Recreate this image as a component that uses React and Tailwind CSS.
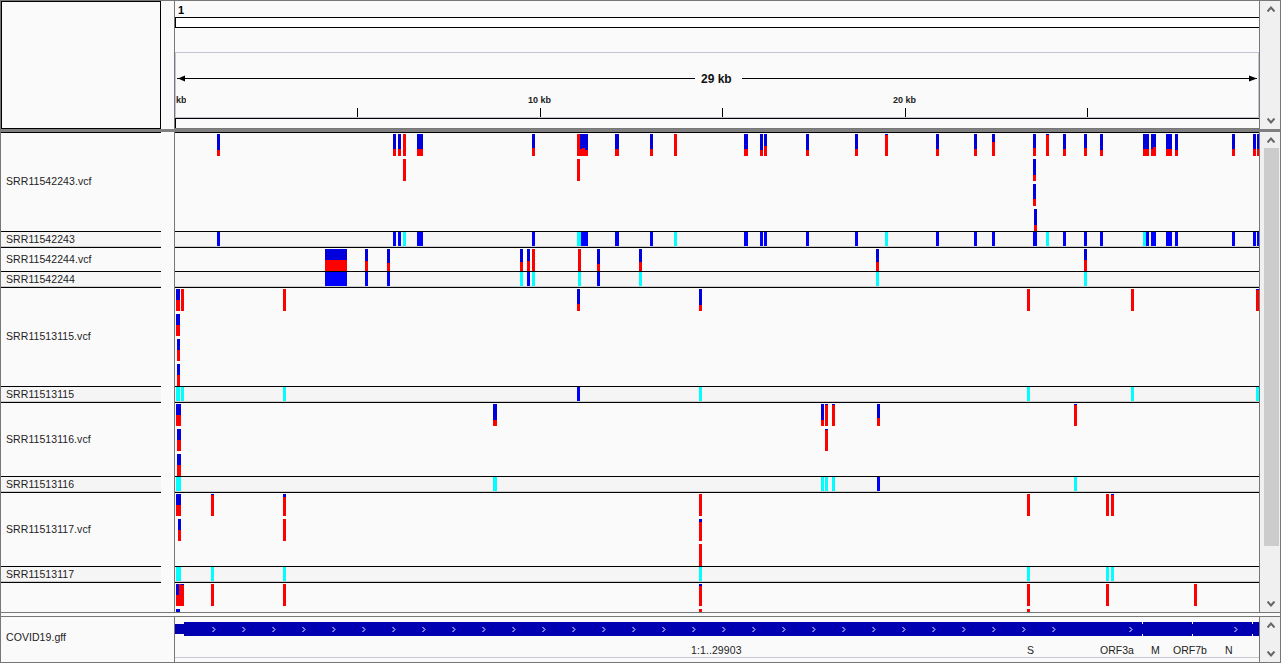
import React from 'react'

const BORDER = 'border-[#777777]'

// vcf marks: [x, width, blue px of 22, stacked row]
const TRACKS = [
  {
    name: 'SRR11542243',
    top: 132,
    height: 99,
    vcf: [
      [217, 3, 16], [393, 3, 15], [398, 3, 15], [403, 3, 0], [417, 6, 15], [532, 3, 14], [577, 3, 0], [580, 2, 15],
      [582, 3, 14], [585, 3, 16], [615, 4, 15], [650, 3, 15], [674, 3, 0], [744, 4, 15], [760, 3, 16], [764, 3, 12],
      [806, 3, 16], [855, 3, 15], [885, 3, 1], [936, 3, 15], [974, 3, 15], [992, 3, 8], [1033, 3, 14], [1046, 3, 1],
      [1063, 3, 15], [1084, 3, 14], [1100, 3, 16], [1143, 6, 15], [1151, 2, 15], [1153, 3, 13], [1166, 6, 15],
      [1175, 3, 16], [1232, 3, 15], [1253, 3, 15], [1257, 2, 15],
      [403, 3, 0, 1], [577, 3, 0, 1], [1033, 3, 16, 1], [1033, 3, 15, 2], [1034, 3, 16, 3],
    ],
    cov: [
      [217, 3], [393, 3], [398, 3], [403, 3, 1], [417, 6], [532, 3], [577, 4, 1], [581, 7], [615, 4], [650, 3],
      [674, 3, 1], [744, 4], [760, 3], [764, 3], [806, 3], [855, 3], [885, 3, 1], [936, 3], [974, 3], [992, 3],
      [1033, 4], [1046, 3, 1], [1063, 3], [1084, 3], [1100, 3], [1143, 3, 1], [1146, 3], [1151, 5], [1166, 6],
      [1175, 3], [1232, 3], [1253, 3], [1257, 2],
    ],
  },
  {
    name: 'SRR11542244',
    top: 247,
    height: 24,
    vcf: [
      [325, 22, 11], [365, 3, 12], [387, 3, 14], [520, 3, 13], [527, 3, 12], [532, 3, 0], [578, 3, 0], [597, 3, 15],
      [639, 3, 13], [876, 3, 13], [1084, 3, 11],
    ],
    cov: [
      [325, 22], [365, 3], [387, 3], [520, 3, 1], [527, 3], [532, 3, 1], [578, 3, 1], [597, 3], [639, 3, 1],
      [876, 3, 1], [1084, 3, 1],
    ],
  },
  {
    name: 'SRR11513115',
    top: 287,
    height: 99,
    vcf: [
      [176, 4, 11], [181, 3, 0], [283, 3, 0], [577, 3, 15], [699, 3, 16], [1027, 3, 0], [1131, 3, 0], [1256, 3, 1],
      [176, 4, 11, 1], [177, 3, 11, 2], [177, 3, 11, 3],
    ],
    cov: [
      [176, 4, 1], [181, 3, 1], [283, 3, 1], [577, 3], [699, 3, 1], [1027, 3, 1], [1131, 3, 1], [1256, 3, 1],
    ],
  },
  {
    name: 'SRR11513116',
    top: 402,
    height: 74,
    vcf: [
      [176, 5, 11], [493, 4, 16], [821, 3, 16], [825, 3, 1], [832, 3, 1], [877, 3, 14], [1074, 3, 1],
      [177, 4, 11, 1], [825, 3, 1, 1], [177, 4, 11, 2],
    ],
    cov: [[176, 5, 1], [493, 4, 1], [821, 3, 1], [825, 3, 1], [832, 3, 1], [877, 3], [1074, 3, 1]],
  },
  {
    name: 'SRR11513117',
    top: 492,
    height: 74,
    vcf: [
      [176, 5, 11], [211, 3, 1], [283, 3, 3], [699, 3, 0], [1027, 3, 0], [1106, 3, 0], [1111, 3, 1],
      [178, 3, 11, 1], [283, 3, 0, 1], [699, 3, 3, 1], [699, 3, 0, 2],
    ],
    cov: [[176, 5, 1], [211, 3, 1], [283, 3, 1], [699, 3, 1], [1027, 3, 1], [1106, 3, 1], [1111, 3, 1]],
  },
]

const LAST_VCF = [
  [176, 3, 11], [179, 2, 0], [181, 3, 1], [211, 3, 0], [283, 3, 0], [699, 3, 2], [1027, 3, 0], [1106, 3, 0],
  [1194, 3, 0], [176, 4, 22, 1], [699, 3, 0, 1], [1027, 3, 0, 1],
]

const TICKS = [357, 540, 722, 905, 1087]

const CHEVRONS = [...Array.from({ length: 29 }, (_, i) => 213 + i * 30), 1130, 1235]

const GENES = [
  { label: 'S', left: 852 },
  { label: 'ORF3a', left: 925 },
  { label: 'M', left: 976 },
  { label: 'ORF7b', left: 998 },
  { label: 'N', left: 1050 },
]

function ScrollArrow({ up }) {
  return (
    <svg width="8" height="6" viewBox="0 0 8 6" className="block">
      <polyline
        points={up ? '0.5,5.5 4,1.5 7.5,5.5' : '0.5,0.5 4,4.5 7.5,0.5'}
        fill="none"
        stroke="#666666"
        strokeWidth="2"
      />
    </svg>
  )
}

function Scrollbar({ thumb }) {
  return (
    <div className="flex h-full w-[20px] flex-col items-center bg-[#f0f0f0] pl-[2px]">
      <div className="flex h-[16px] w-full shrink-0 items-center justify-center">
        <ScrollArrow up />
      </div>
      <div className="flex-1 self-stretch pl-[2px]">
        {thumb && <div className="h-[398px] w-[15px] bg-[#cccccc]" />}
      </div>
      <div className="flex h-[16px] w-full shrink-0 items-center justify-center">
        <ScrollArrow />
      </div>
    </div>
  )
}

function VcfMarks({ top, height, marks }) {
  return (
    <svg
      width="1084"
      height={height - 1}
      viewBox={`175 ${top + 1} 1084 ${height - 1}`}
      shapeRendering="crispEdges"
      className="block"
    >
      {marks.map(([x, w, blue, row = 0], i) => {
        const y = top + 2 + row * 25
        return (
          <g key={i}>
            <rect x={x} y={y} width={w} height={22} fill="#ff0000" />
            {blue > 0 && <rect x={x} y={y} width={w} height={blue} fill="#0000dc" />}
          </g>
        )
      })}
    </svg>
  )
}

function CovMarks({ marks }) {
  return (
    <svg width="1084" height="14" viewBox="175 0 1084 14" shapeRendering="crispEdges" className="block">
      {marks.map(([x, w, cyan], i) => (
        <rect key={i} x={x} y={0} width={w} height={14} fill={cyan ? '#00ffff' : '#0000ff'} />
      ))}
    </svg>
  )
}

function VcfRow({ label, height, children }) {
  return (
    <div className="flex" style={{ height }}>
      <div className="flex w-[160px] items-center border-t border-black pb-[2px] pl-[5px]">{label}</div>
      <div className="w-[13px]" />
      <div className={`w-[1086px] border-x ${BORDER}`}>
        <div className="h-full border-t border-black">{children}</div>
      </div>
    </div>
  )
}

function CovRow({ label, marks }) {
  return (
    <div className="flex h-[16px]">
      <div className="flex w-[160px] items-center border-y border-t-black border-b-[#cccccc] bg-[#f5f5f5] pl-[5px]">
        {label}
      </div>
      <div className="w-[13px]" />
      <div className={`w-[1086px] border-x ${BORDER}`}>
        <div className="h-full border-y border-t-black border-b-[#cccccc] bg-[#f5f5f5]">
          <CovMarks marks={marks} />
        </div>
      </div>
    </div>
  )
}

function Ruler() {
  return (
    <div className="flex h-full flex-col">
      <div className="h-[16px] pt-[1px] pl-[3px] text-[11px] leading-[16px] font-bold text-black">1</div>
      <div className="h-[11px] border border-r-0 border-black bg-white" />
      <div className="h-[24px]" />
      <div className="relative h-[66px] border border-[#c4c4d2]">
        <svg
          width="1084"
          height="66"
          viewBox="175 52 1084 66"
          shapeRendering="crispEdges"
          className="absolute top-[-1px] left-[-1px]"
        >
          <rect x="177" y="78" width="518" height="1" fill="#000000" />
          <rect x="742" y="78" width="515" height="1" fill="#000000" />
          <polygon points="178,78.5 185,75.5 185,81.5" fill="#000000" shapeRendering="auto" />
          <polygon points="1257,78.5 1249,75.5 1249,81.5" fill="#000000" shapeRendering="auto" />
          {TICKS.map((x) => (
            <rect key={x} x={x} y="108" width="1" height="9" fill="#000000" />
          ))}
        </svg>
        <span className="absolute top-[19px] left-[525px] text-[12px] leading-[14px] font-bold text-[#111111]">
          29 kb
        </span>
        <span className="absolute top-[41px] left-0 w-[10px] overflow-hidden text-right text-[9px] leading-[12px] font-bold whitespace-nowrap text-[#222222]">
          kb
        </span>
        <span className="absolute top-[41px] left-[352px] text-[9px] leading-[12px] font-bold text-[#222222]">
          10 kb
        </span>
        <span className="absolute top-[41px] left-[717px] text-[9px] leading-[12px] font-bold text-[#222222]">
          20 kb
        </span>
      </div>
      <div className="flex-1 border-t border-l border-black" />
      <div className="h-px bg-[#777777]" />
    </div>
  )
}

function GeneTrack() {
  return (
    <div className="relative h-full pt-[5px]">
      <svg width="1084" height="15" viewBox="175 622 1084 15" shapeRendering="crispEdges" className="block">
        <rect x="175" y="624" width="9" height="10" fill="#0000b2" />
        <rect x="184" y="622" width="1075" height="14" fill="#0000b2" />
        {[1142, 1192, 1252].map((x) => (
          <g key={x} fill="#fafafa">
            <rect x={x} y="622" width="1" height="2" />
            <rect x={x} y="634" width="1" height="2" />
          </g>
        ))}
        {CHEVRONS.map((x) => (
          <polyline
            key={x}
            points={`${x - 0.5},627 ${x + 2},629.5 ${x - 0.5},632`}
            fill="none"
            stroke="#ffffff"
            strokeWidth="1"
            shapeRendering="auto"
          />
        ))}
      </svg>
      <span className="absolute top-[27px] left-[516px] text-[10.5px] leading-[12px] tracking-[0.1px] text-[#222222]">
        1:1..29903
      </span>
      {GENES.map((g) => (
        <span key={g.label} className="absolute top-[27px] text-[10.5px] leading-[12px] text-[#222222]" style={{ left: g.left }}>
          {g.label}
        </span>
      ))}
      <div className="absolute top-[40px] right-0 left-0 h-px bg-[#c8c8d0]" />
    </div>
  )
}

const labelCls = "text-[10.5px] leading-[12px] tracking-[0.07px] whitespace-nowrap text-[#222222]"

export default function App() {
  return (
    <div
      className={`flex h-[663px] w-[1281px] flex-col border ${BORDER} bg-[#fafafa] font-['Liberation_Sans',Arial,sans-serif]`}
    >
      {/* header */}
      <div className="flex h-[128px] shrink-0">
        <div className="w-[160px] border border-black" />
        <div className="w-[13px]" />
        <div className={`w-[1086px] border-x ${BORDER}`}>
          <Ruler />
        </div>
        <Scrollbar />
      </div>
      <div className="h-[3px] shrink-0 bg-[#808080]" />

      {/* data panel */}
      <div className={`flex h-[481px] shrink-0 border-b ${BORDER}`}>
        <div className="flex w-[1259px] flex-col">
          {TRACKS.map((t) => (
            <React.Fragment key={t.name}>
              <VcfRow label={<span className={labelCls}>{t.name}.vcf</span>} height={t.height}>
                <VcfMarks top={t.top} height={t.height} marks={t.vcf} />
              </VcfRow>
              <CovRow label={<span className={labelCls}>{t.name}</span>} marks={t.cov} />
            </React.Fragment>
          ))}
          <VcfRow height={30}>
            <VcfMarks top={582} height={30} marks={LAST_VCF} />
          </VcfRow>
        </div>
        <Scrollbar thumb />
      </div>
      <div className="h-[3px] shrink-0" />

      {/* feature panel */}
      <div className={`flex h-[46px] shrink-0 border-t ${BORDER}`}>
        <div className="flex w-[160px] items-center pb-[6px] pl-[5px]">
          <span className={labelCls}>COVID19.gff</span>
        </div>
        <div className="w-[13px]" />
        <div className={`w-[1086px] border-x ${BORDER}`}>
          <GeneTrack />
        </div>
        <Scrollbar />
      </div>
    </div>
  )
}
